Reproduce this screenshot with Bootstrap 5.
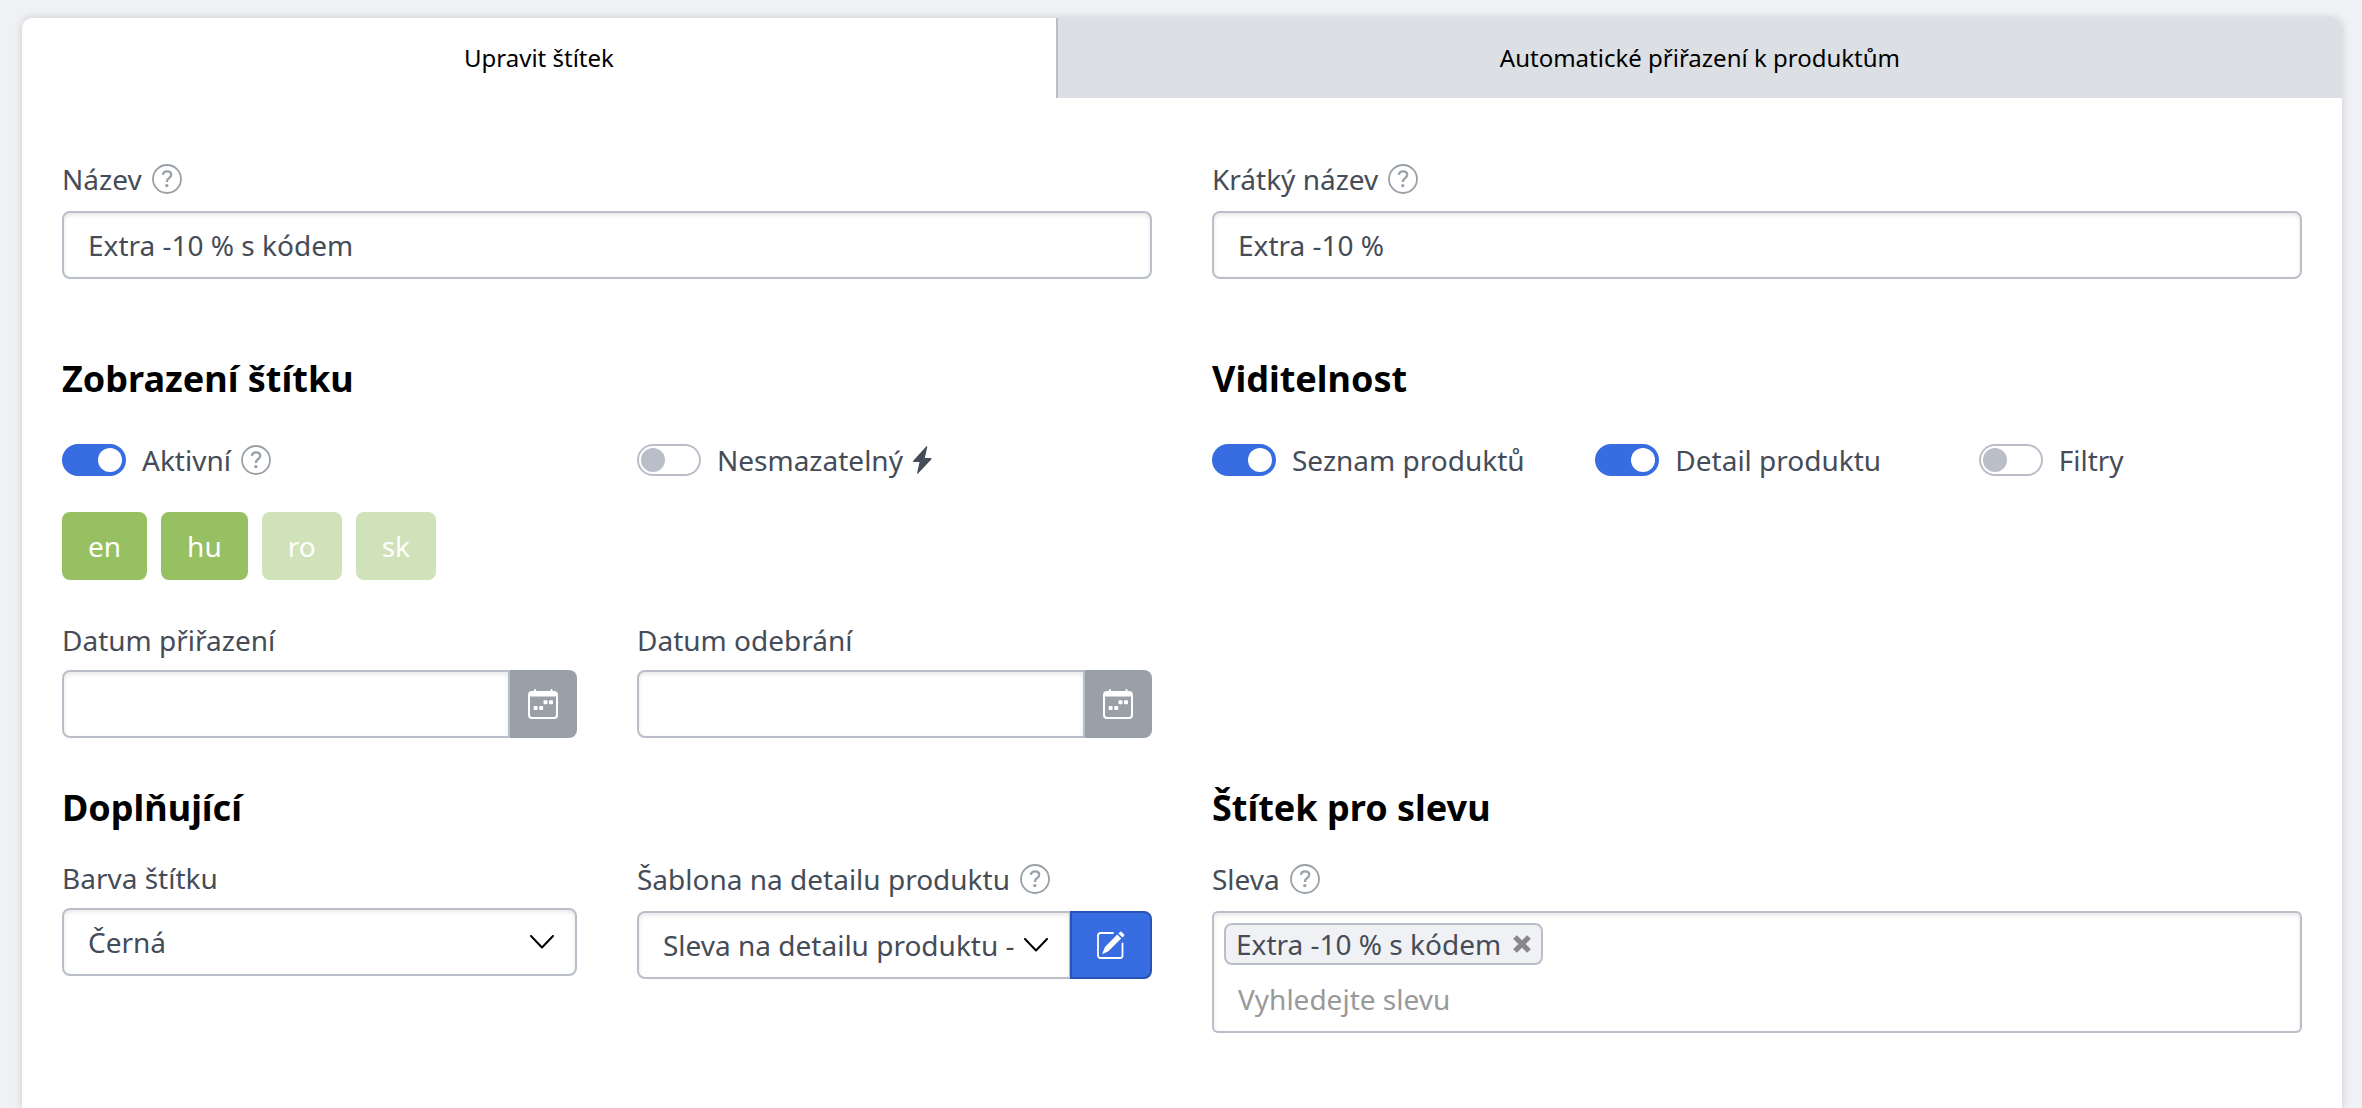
<!DOCTYPE html>
<html lang="cs">
<head>
<meta charset="utf-8">
<meta name="viewport" content="width=device-width, initial-scale=1">
<title>Upravit štítek</title>
<link href="https://cdn.jsdelivr.net/npm/bootstrap@5.3.0/dist/css/bootstrap.min.css" rel="stylesheet">
<style>
:root { --line: #b9bec9; --ink: #454c57; --accent: #386de1; --accent-dark: #2852b3; --muted: #9aa0a8; }
body { background: #f0f1f5; color: var(--ink); font-family: "Noto Sans", "Open Sans", sans-serif; font-size: 28px; line-height: 40px; }
.page { padding: 18px 20px 0 22px; }
.panel { background: #fff; border-radius: 10px 10px 0 0; box-shadow: 0 0 8px rgba(0,0,0,.16); }
.panel-tabs .nav-link { color: #000; font-size: 24px; line-height: 40px; padding: 20px 16px; border-radius: 0; background: #dcdfe3; }
.panel-tabs .nav-item + .nav-item .nav-link { border-left: 2px solid var(--line); border-top-right-radius: 10px; }
.panel-tabs .nav-link.active { color: #000; background: transparent; }
.panel-body { padding: 60px 40px 75px; }
.form-row { --bs-gutter-x: 60px; }
h2 { font-size: 36px; font-weight: 700; line-height: 50px; color: #000; margin-bottom: 36px; }
.heading-tight { margin-bottom: 25px; }
.section { margin-top: 75px; }
.section-next { margin-top: 45px; }
.field-head { display: flex; align-items: center; gap: 10px; min-height: 40px; margin-bottom: 10px; }
.field-head.with-help { min-height: 41px; margin-bottom: 12px; }
.help { border: 0; padding: 0; background: none; color: var(--muted); display: flex; }
.form-control, .form-select { height: 68px; font-size: 28px; line-height: 40px; color: var(--ink); border: 2px solid var(--line); border-radius: 8px; padding: 12px 24px; box-shadow: inset 0 2px 4px rgba(0,0,0,.1); background-color: #fff; }
.form-select { padding-right: 50px; background-size: 24px 14px; background-position: right 21px center;
  background-image: url("data:image/svg+xml,%3Csvg xmlns='http://www.w3.org/2000/svg' viewBox='0 0 24 14'%3E%3Cpath d='M1 1l11 11.500L23 1' fill='none' stroke='%23000' stroke-width='2' stroke-linecap='round' stroke-linejoin='round'/%3E%3C/svg%3E"); }
.form-check.form-switch { display: flex; align-items: center; gap: 16px; padding: 0; margin: 0; min-height: 40px; }
.form-switch .form-check-input { float: none; flex: none; margin: 0; width: 64px; height: 32px; border: 2px solid var(--line); border-radius: 32px; background-color: #fff; background-size: 24px 24px; background-position: left 2px center;
  background-image: url("data:image/svg+xml,%3Csvg xmlns='http://www.w3.org/2000/svg' viewBox='0 0 24 24'%3E%3Ccircle cx='12' cy='12' r='12' fill='%23b9bec9'/%3E%3C/svg%3E"); }
.form-switch .form-check-input:checked { border-color: var(--accent); background-color: var(--accent); background-position: right 2px center;
  background-image: url("data:image/svg+xml,%3Csvg xmlns='http://www.w3.org/2000/svg' viewBox='0 0 24 24'%3E%3Ccircle cx='12' cy='12' r='12' fill='%23fff'/%3E%3C/svg%3E"); }
.with-icon { display: flex; align-items: center; gap: 10px; }
.lang-list { display: flex; gap: 14px; margin: 32px 0 40px; }
.btn-lang { height: 68px; padding: 12px 24px; font-size: 28px; line-height: 40px; border: 2px solid #97c062; border-radius: 8px; color: #fff; background: #97c062; }
.btn-lang.off { border-color: #d0e2b9; background: #d0e2b9; }
.btn-date { width: 68px; height: 68px; padding: 0; border: 0; border-radius: 8px; background: var(--muted); color: #fff; }
.btn-edit { width: 82px; height: 68px; padding: 0; border: 2px solid var(--accent-dark); border-radius: 8px; background: var(--accent); color: #fff; }
.input-group > .btn.btn-date { margin-left: -2px; z-index: 0; }
.input-group > .form-control { z-index: 1; }
.input-group > .btn.btn-edit { margin-left: -2px; }
.btn-date svg, .btn-edit svg { display: block; margin: 0 auto; }
.tag-box { border: 2px solid var(--line); border-radius: 6px; padding: 10px 10px 12px; box-shadow: inset 0 2px 4px rgba(0,0,0,.1); }
.tag-item { display: inline-flex; align-items: center; gap: 12px; border: 2px solid var(--line); border-radius: 8px; background: #f0f1f5; padding: 0 10px; line-height: 38px; }
.tag-item button { border: 0; padding: 0; background: none; display: flex; color: #888; }
.tag-search { display: block; width: 100%; border: 0; outline: 0; background: none; padding: 0 14px; margin-top: 14px; height: 40px; line-height: 40px; color: var(--ink); }
.tag-search::placeholder { color: #999; opacity: 1; }
</style>
<script src="https://cdn.jsdelivr.net/npm/bootstrap@5.3.0/dist/js/bootstrap.bundle.min.js"></script>
</head>
<body>
<svg class="d-none" aria-hidden="true">
  <symbol id="i-help" viewBox="0 0 30 30">
    <circle cx="15" cy="15" r="14" fill="none" stroke="currentColor" stroke-width="1.800"/>
    <path d="M10.900 10.900c.2-2.200 1.800-3.500 4.200-3.500 2.500 0 4.100 1.400 4.100 3.400 0 1.600-.8 2.500-2.200 3.400-1.400.9-2 1.600-2 3v.7" fill="none" stroke="currentColor" stroke-width="2.300"/>
    <circle cx="14.800" cy="21.600" r="1.700" fill="currentColor"/>
  </symbol>
  <symbol id="i-cal" viewBox="0 0 30 30">
    <path fill="currentColor" d="M4 2h2V1a1 1 0 0 1 2 0v1h14.500V1a1 1 0 0 1 2 0v1H26a4 4 0 0 1 4 4v20a4 4 0 0 1-4 4H4a4 4 0 0 1-4-4V6a4 4 0 0 1 4-4zM2 7.500V26a2 2 0 0 0 2 2h22a2 2 0 0 0 2-2V7.500z"/>
    <g fill="currentColor"><rect x="15.500" y="11.200" width="4" height="4" rx="1"/><rect x="21" y="11.200" width="4" height="4" rx="1"/><rect x="5.600" y="17" width="4" height="4" rx="1"/><rect x="11.200" y="17" width="4" height="4" rx="1"/></g>
  </symbol>
</svg>

<main class="page min-vh-100 d-flex flex-column">
  <div class="panel flex-grow-1">
    <ul class="nav nav-fill panel-tabs flex-nowrap">
      <li class="nav-item"><a class="nav-link active" href="#edit" aria-current="page">Upravit štítek</a></li>
      <li class="nav-item"><a class="nav-link" href="#auto">Automatické přiřazení k produktům</a></li>
    </ul>
    <form class="panel-body" id="edit">
      <div class="row form-row">
        <div class="col-6">
          <div class="field-head with-help"><label for="name">Název</label>
            <button class="help" type="button" aria-label="Nápověda"><svg width="30" height="30"><use href="#i-help"/></svg></button></div>
          <input class="form-control" id="name" type="text" value="Extra -10 % s kódem">
        </div>
        <div class="col-6">
          <div class="field-head with-help"><label for="short">Krátký název</label>
            <button class="help" type="button" aria-label="Nápověda"><svg width="30" height="30"><use href="#i-help"/></svg></button></div>
          <input class="form-control" id="short" type="text" value="Extra -10 %">
        </div>
      </div>

      <div class="row form-row section">
        <div class="col-6">
          <h2>Zobrazení štítku</h2>
          <div class="row form-row">
            <div class="col-6">
              <div class="form-check form-switch">
                <input class="form-check-input" type="checkbox" role="switch" id="active" checked>
                <div class="with-icon"><label for="active">Aktivní</label>
                  <button class="help" type="button" aria-label="Nápověda"><svg width="30" height="30"><use href="#i-help"/></svg></button></div>
              </div>
            </div>
            <div class="col-6">
              <div class="form-check form-switch">
                <input class="form-check-input" type="checkbox" role="switch" id="locked">
                <label class="with-icon" for="locked">Nesmazatelný
                  <svg width="19" height="28" viewBox="0 0 19 28" fill="currentColor"><path d="M13.800.2a.6.6 0 0 1 .5.700L11.800 12h6a.8.8 0 0 1 .7 1.200L5 27.500a.5.5 0 0 1-.9-.4L6.500 16H.8a.7.700 0 0 1-.6-1.200L13.200.4a.6.6 0 0 1 .6-.2z"/></svg></label>
              </div>
            </div>
          </div>
          <div class="lang-list">
            <button class="btn btn-lang" type="button">en</button>
            <button class="btn btn-lang" type="button">hu</button>
            <button class="btn btn-lang off" type="button">ro</button>
            <button class="btn btn-lang off" type="button">sk</button>
          </div>
          <div class="row form-row">
            <div class="col-6">
              <div class="field-head"><label for="from">Datum přiřazení</label></div>
              <div class="input-group">
                <input class="form-control" id="from" type="text">
                <button class="btn btn-date" type="button" aria-label="Vybrat datum"><svg width="30" height="30"><use href="#i-cal"/></svg></button>
              </div>
            </div>
            <div class="col-6">
              <div class="field-head"><label for="to">Datum odebrání</label></div>
              <div class="input-group">
                <input class="form-control" id="to" type="text">
                <button class="btn btn-date" type="button" aria-label="Vybrat datum"><svg width="30" height="30"><use href="#i-cal"/></svg></button>
              </div>
            </div>
          </div>
        </div>
        <div class="col-6">
          <h2>Viditelnost</h2>
          <div class="row form-row">
            <div class="col-4"><div class="form-check form-switch">
              <input class="form-check-input" type="checkbox" role="switch" id="list" checked><label for="list">Seznam produktů</label></div></div>
            <div class="col-4"><div class="form-check form-switch">
              <input class="form-check-input" type="checkbox" role="switch" id="detail" checked><label for="detail">Detail produktu</label></div></div>
            <div class="col-4"><div class="form-check form-switch">
              <input class="form-check-input" type="checkbox" role="switch" id="filters"><label for="filters">Filtry</label></div></div>
          </div>
        </div>
      </div>

      <div class="row form-row section-next">
        <div class="col-6">
          <h2 class="heading-tight">Doplňující</h2>
          <div class="row form-row">
            <div class="col-6">
              <div class="field-head"><label for="color">Barva štítku</label></div>
              <select class="form-select" id="color"><option>Černá</option></select>
            </div>
            <div class="col-6">
              <div class="field-head with-help"><label for="tpl">Šablona na detailu produktu</label>
                <button class="help" type="button" aria-label="Nápověda"><svg width="30" height="30"><use href="#i-help"/></svg></button></div>
              <div class="input-group flex-nowrap">
                <select class="form-select" id="tpl"><option>Sleva na detailu produktu -</option></select>
                <button class="btn btn-edit" type="button" aria-label="Upravit šablonu">
                  <svg width="28" height="28" viewBox="0 0 28 28"><path d="M16 2H3.500A2.500 2.500 0 0 0 1 4.500v20A2.500 2.500 0 0 0 3.500 27H23a2.500 2.500 0 0 0 2.500-2.500V12.500" fill="none" stroke="currentColor" stroke-width="1.800" stroke-linecap="round"/><path d="M20.300 3.500l3.900 3.900L11.400 20.200l-5.200 2.600a.5.5 0 0 1-.7-.7L8 16zM21.400 2.400l1.500-1.500a1.200 1.200 0 0 1 1.700 0l2.400 2.400a1.200 1.200 0 0 1 0 1.700l-1.500 1.500z" fill="currentColor"/></svg>
                </button>
              </div>
            </div>
          </div>
        </div>
        <div class="col-6">
          <h2 class="heading-tight">Štítek pro slevu</h2>
          <div class="field-head with-help"><label for="discount">Sleva</label>
            <button class="help" type="button" aria-label="Nápověda"><svg width="30" height="30"><use href="#i-help"/></svg></button></div>
          <div class="tag-box">
            <div class="d-flex"><span class="tag-item">Extra -10 % s kódem
              <button type="button" aria-label="Odebrat"><svg width="18" height="18" viewBox="0 0 18 18"><path d="M2 2l14 14M16 2L2 16" stroke="currentColor" stroke-width="5.200"/></svg></button></span></div>
            <input class="tag-search" id="discount" type="text" placeholder="Vyhledejte slevu">
          </div>
        </div>
      </div>
    </form>
  </div>
</main>
</body>
</html>
